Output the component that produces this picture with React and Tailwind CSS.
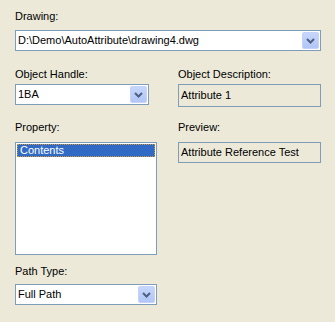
import React from 'react';

const font = { fontFamily: '"Liberation Sans", Arial, sans-serif' };

// little XP-style dropdown arrow button
const DropButton = () => (
  <div className="absolute right-px top-px bottom-px w-[17px] rounded-[2px] border border-[#C3D3FD] bg-gradient-to-b from-[#C6D6FC] to-[#B2C6F5] flex items-center justify-center">
    <svg width="9" height="6" viewBox="0 0 9 6">
      <polyline points="1,1 4.5,4.5 8,1" fill="none" stroke="#4D6185" strokeWidth="2" />
    </svg>
  </div>
);

const Combo = ({ value, width }) => (
  <div className={`relative h-[21px] border border-[#7F9DB9] bg-white flex items-center pl-[2px] ${width}`}>
    <span className="leading-[13px]">{value}</span>
    <DropButton />
  </div>
);

const Label = ({ children }) => <div className="h-[13px] leading-[13px]">{children}</div>;

export default function App() {
  return (
    <div className="w-[335px] h-[322px] bg-[#ECE9D8] text-[11px] text-black pl-[15px] pt-[10px]" style={font}>
      <Label>Drawing:</Label>
      <div className="mt-[7px]">
        <Combo value="D:\Demo\AutoAttribute\drawing4.dwg" width="w-[306px]" />
      </div>

      <div className="flex mt-[17px]">
        <div className="w-[163px]">
          <Label>Object Handle:</Label>
          <div className="mt-[3px]">
            <Combo value="1BA" width="w-[134px]" />
          </div>
        </div>
        <div className="w-[143px]">
          <Label>Object Description:</Label>
          <div className="mt-[3px] h-[23px] border border-[#7F9DB9] flex items-center pl-[2px]">
            Attribute 1
          </div>
        </div>
      </div>

      <div className="flex mt-[14px]">
        <div className="w-[163px]">
          <Label>Property:</Label>
          <div className="mt-[8px] w-[142px] h-[113px] border border-[#7F9DB9] bg-white p-px">
            <div className="h-[13px] leading-[11px] bg-[#316AC5] text-white border border-dotted border-[#CE9539] pl-[2px]">
              Contents
            </div>
          </div>
        </div>
        <div className="w-[143px]">
          <Label>Preview:</Label>
          <div className="mt-[8px] h-[21px] border border-[#7F9DB9] flex items-center pl-[2px]">
            Attribute Reference Test
          </div>
        </div>
      </div>

      <div className="mt-[10px]">
        <Label>Path Type:</Label>
        <div className="mt-[6px]">
          <Combo value="Full Path" width="w-[142px]" />
        </div>
      </div>
    </div>
  );
}
